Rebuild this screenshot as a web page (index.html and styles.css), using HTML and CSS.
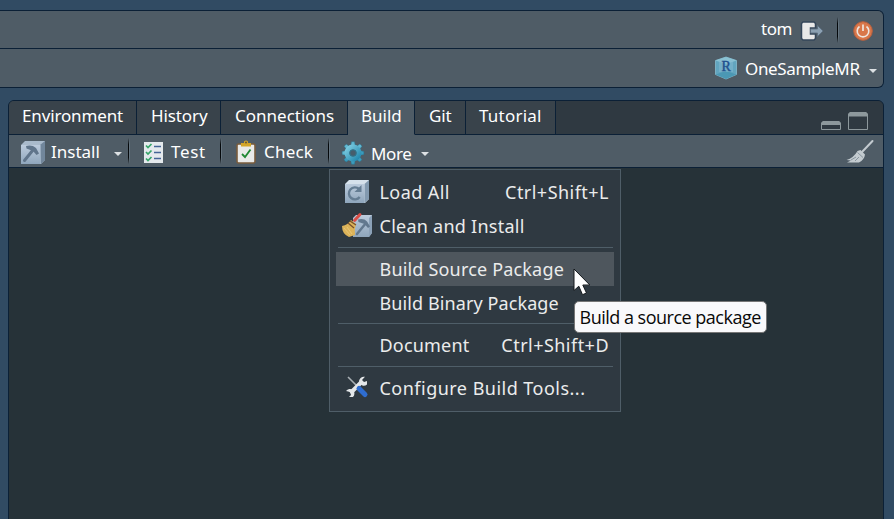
FILE: index.html
```html
<!DOCTYPE html>
<html lang="en">
<head>
<meta charset="utf-8">
<title>RStudio</title>
<link rel="stylesheet" href="styles.css">
</head>
<body>
<svg class="defs" width="0" height="0" aria-hidden="true">
  <defs>
    <linearGradient id="face" x1="0" y1="0" x2="0" y2="1"><stop offset="0" stop-color="#bccbdc"/><stop offset="1" stop-color="#8fa6bc"/></linearGradient>
    <linearGradient id="gearfill" x1="0" y1="0" x2="1" y2="1"><stop offset="0" stop-color="#7ccbe0"/><stop offset="1" stop-color="#2288ae"/></linearGradient>
  </defs>
</svg>
<header class="global">
  <div class="global-row account">
    <span class="user">tom</span>
    <svg class="signout" width="25" height="22" viewBox="0 0 25 22"><path d="M3 2h11l1.500 1.500V8h-5v6h5v4.500L14 20H3l-1.500-1.500v-15z" fill="#e8e8e8" stroke="#34465a" stroke-width="1.500"/><path d="M10.500 9h7V5.500L23 11l-5.500 5.500V13h-7z" fill="#8ba0b2" stroke="#5a6c7e" stroke-width=".8"/></svg>
    <i class="sep"></i>
    <svg class="power" width="20" height="20" viewBox="0 0 20 20"><circle cx="10" cy="10" r="9.300" fill="#d9774a" stroke="#b9603e"/><path d="M6.500 5.500a5.800 5.800 0 1 0 7 0" fill="none" stroke="#eee5df" stroke-width="1.600"/><path d="M10 3.500v6.500" stroke="#eee5df" stroke-width="1.700"/></svg>
  </div>
  <div class="global-row project">
    <svg width="24" height="24" viewBox="0 0 24 24"><path d="M12 1l10.500 3.500v14L12 23 1.500 18.500v-14z" fill="#62a5bf" stroke="#86bdcf" stroke-width=".8"/><path d="M1.500 4.500L12 8l10.500-3.500L12 1z" fill="#8ac2d3"/><path d="M1.500 18.500L12 15l10.500 3.500L12 23z" fill="#4b98b4"/><path d="M5 4h14v12H5z" fill="#86b9d1" opacity=".5"/><text x="12.200" y="14.500" class="cube-letter">R</text></svg>
    <span class="project-name">OneSampleMR</span>
    <i class="caret"></i>
  </div>
</header>
<main class="pane">
  <nav class="tabs">
    <div class="tab t-env"><span>Environment</span></div>
    <div class="tab t-his"><span>History</span></div>
    <div class="tab t-con"><span>Connections</span></div>
    <div class="tab t-bld active"><span>Build</span></div>
    <div class="tab t-git"><span>Git</span></div>
    <div class="tab t-tut"><span>Tutorial</span></div>
    <div class="window">
      <svg width="50" height="20" viewBox="0 0 50 20"><path d="M1.500 18.500v-6.500l2-1.500h15l2 1.500v6.500z" fill="#2f3941" stroke="#8d989c"/><path d="M1 14v-2l2-2h16l2 2v2z" fill="#8d989c"/><path d="M28.500 18.500V3l2-1.500h15l2 1.500v15.500z" fill="#2f3941" stroke="#8d989c"/><path d="M28 5.500V3l2-2h16l2 2v2.500z" fill="#8d989c"/></svg>
    </div>
  </nav>
  <div class="toolbar">
    <div class="tool install">
      <svg width="24" height="24" viewBox="0 0 24 24"><path d="M0 4l4-4h20v19l-4 4H0z" fill="#a9bacb"/><path d="M19 4l5-4v19l-4 4z" fill="#71869b"/><path d="M0 4h19.500v19H0z" fill="url(#face)"/><path d="M3.500 19.500L12 9" stroke="#60758b" stroke-width="3" stroke-linecap="round"/><path d="M5 5q6-1.500 10 2l3 5.500-2.500 1.500-3.500-4L5.500 7.500z" fill="#60758b"/></svg>
      <span>Install</span><i class="caret"></i>
    </div>
    <i class="sep"></i>
    <div class="tool test">
      <svg width="19" height="21" viewBox="0 0 19 21"><path d="M0 0h19v21H0z" fill="#e4e9ed"/><path d="M2 3.500l2 2L7.500 2M2 10l2 2 3.500-3.500M2 16.500l2 2L7.500 15" fill="none" stroke="#36a569" stroke-width="1.700"/><path d="M10 4.500h7M10 10.500h7M10 16.500h7" stroke="#456597" stroke-width="1.300"/></svg>
      <span>Test</span>
    </div>
    <i class="sep"></i>
    <div class="tool check">
      <svg width="20" height="24" viewBox="0 0 20 24"><rect x="1" y="4" width="18" height="19" rx="1.500" fill="#e9eae9" stroke="#795c3d" stroke-width="1.600"/><path d="M5 6.500V3h3V1.500q2-2 4 0V3h3v3.500z" fill="#d3a528"/><circle cx="10" cy="2.500" r="1" fill="#645330"/><path d="M6 14l3 3 5.500-7.500" fill="none" stroke="#218834" stroke-width="1.800"/></svg>
      <span>Check</span>
    </div>
    <i class="sep"></i>
    <div class="tool more">
      <svg width="22" height="24" viewBox="0 0 22 24"><g fill="url(#gearfill)" stroke="#207998" stroke-width=".4"><path d="M8.800 5L9.500.8h3L13.200 5zM8.800 19l.7 4.200h3l.7-4.200zM4 9.800L.2 10.500v3l3.800.7zM18 9.800l3.800.7v3l-3.800.7z"/><path d="M8.800 5L9.500.8h3L13.200 5zM8.800 19l.7 4.200h3l.7-4.200zM4 9.800L0 10.500v3l4 .7zM18 9.800l4 .7v3l-4 .7z" transform="rotate(45 11 12)"/></g><circle cx="11" cy="12" r="6" fill="none" stroke="url(#gearfill)" stroke-width="5"/><circle cx="11" cy="12" r="3.300" fill="#465d6c" stroke="#287d98" stroke-width=".8"/></svg>
      <span>More</span><i class="caret"></i>
    </div>
    <svg class="clear" width="28" height="23" viewBox="0 0 28 23"><path d="M16 12L26.500 1" stroke="#c3cacf" stroke-width="2" stroke-linecap="round"/><path d="M11.500 11l3-1 4.500 4.500q-.5 5-6 8H1l4-2-4.500-.5q7-2 11-9z" fill="#c3cbd0"/><path d="M11.500 12.500l5.500 5M5 20l5-3M9 21l4-4" stroke="#788791" stroke-width=".8"/></svg>
  </div>
</main>
<div class="menu">
  <div class="item">
    <svg class="i-load" width="24" height="23" viewBox="0 0 24 23"><path d="M0 4l4-4h20v19l-4 4H0z" fill="#d6e1eb"/><path d="M19.500 4L24 0v19l-4.500 4z" fill="#8299af"/><path d="M0 4h19.500v19H0z" fill="url(#face)"/><path d="M14 9a6 6 0 1 0 .7 8" fill="none" stroke="#657d93" stroke-width="2.400"/><path d="M16.500 5v7h-7z" fill="#657d93"/></svg>
    <span class="l-load">Load All</span><kbd>Ctrl+Shift+L</kbd>
  </div>
  <div class="item">
    <svg class="i-clean" width="30" height="25" viewBox="0 0 30 25"><path d="M11 5l3-3h16v18l-3 4H11z" fill="url(#face)"/><path d="M27 5l3-3v18l-3 4z" fill="#8ba1b8"/><path d="M15 21l9-11" stroke="#62788e" stroke-width="2.500" stroke-linecap="round"/><path d="M16 6.500q6-1.500 9 2l3 5-2 1.500-3.500-4-6-2z" fill="#62788e"/><path d="M12.500 7.500L18 1.500" stroke="#d84e47" stroke-width="3" stroke-linecap="round"/><path d="M0 13q6-1 9-6l5 4q-2 5-1 11l-6 2Q0 21 0 13z" fill="#dcb359"/><path d="M6 10l6 5M8 8l6 4" stroke="#78502c" stroke-width="1.300"/><path d="M2 15l6 7M5 14l5 7" stroke="#ecd084" stroke-width=".7"/></svg>
    <span class="l-clean">Clean and Install</span>
  </div>
  <hr>
  <div class="item hover"><span class="l-src">Build Source Package</span></div>
  <div class="item"><span class="l-bin">Build Binary Package</span></div>
  <hr>
  <div class="item"><span class="l-doc">Document</span><kbd>Ctrl+Shift+D</kbd></div>
  <hr>
  <div class="item">
    <svg class="i-tools" width="24" height="22" viewBox="0 0 24 22"><path d="M3 1l9 9" stroke="#a9b0b5" stroke-width="1.600"/><path d="M5.500 17L16.500 6" stroke="#e4e7e9" stroke-width="4"/><path d="M20 .8a5 5 0 0 0-6 5.500 5 5 0 0 0 8 2.200V5l-3 1-2-2zM1 15a5 5 0 0 1 7-1 5 5 0 0 1 0 7H4l2-2-1-3z" fill="#e4e7e9"/><path d="M14 12.500l6 6" stroke="#2f6dd0" stroke-width="5" stroke-linecap="round"/></svg>
    <span class="l-conf">Configure Build Tools...</span>
  </div>
</div>
<div class="tooltip"><span>Build a source package</span></div>
<svg class="cursor" width="20" height="29" viewBox="0 0 20 29"><path d="M1 1v21.500l4.800-4.300 3.700 8.500 4-1.700-3.700-8h7z" fill="#fff" stroke="#14191d" stroke-width="1"/></svg>
</body>
</html>
```
FILE: styles.css
```css
* { box-sizing: border-box; }
body {
  margin: 0; width: 894px; height: 519px; overflow: hidden; position: relative;
  background: #314b63; color: #fff;
  font: 17px/24px "Noto Sans", "Open Sans", sans-serif;
}
svg { display: block; flex: none; overflow: visible; }
span, kbd { display: block; white-space: nowrap; font: inherit; }
.defs { position: absolute; }
.caret { width: 0; height: 0; margin-top: 5px; border: 4px solid transparent; border-top-color: #dde1e4; border-bottom: 0; flex: none; }
.sep { width: 2px; height: 26px; flex: none; background: linear-gradient(90deg, #05090c 50%, #64737e 50%); -webkit-mask-image: linear-gradient(transparent, #000 25%, #000 75%, transparent); }

.global { width: 884px; height: 78px; margin-top: 10px; border: 1px solid #0b2036; border-left: 0; border-radius: 0 6px 6px 0; background: #4f5c66; }
.global-row { display: flex; align-items: center; height: 38px; }
.account { border-bottom: 1px solid #0b2036; padding-left: 761px; }
.user { width: 39px; margin-top: -2px; letter-spacing: -.5px; }
.signout { margin-top: 3px; }
.account .sep { margin-left: 12px; }
.power { margin: 3px 0 0 14px; }
.project { padding-left: 714px; }
.project-name { width: 124px; margin: 2px 0 0 7px; letter-spacing: -.36px; }
.cube-letter { font: 14px "Liberation Serif", serif; fill: #204f8d; stroke: #204f8d; stroke-width: .4px; text-anchor: middle; }

.pane { width: 876px; height: 430px; margin: 12px 0 0 8px; border: 1px solid #0b2036; border-radius: 6px 6px 0 0; background: #263238; overflow: hidden; }
.tabs { display: flex; height: 34px; background: #2f3941; }
.tab { height: 34px; padding: 3px 0 0 14px; border-right: 1px solid #0b2036; border-bottom: 1px solid #0b2036; background: #39434b; letter-spacing: -.1px; }
.tab.active { background: #4f5c66; border-bottom-color: #4f5c66; }
.t-env { width: 128px; padding-left: 13px; letter-spacing: -.14px; }
.t-his { width: 84px; }
.t-con { width: 127px; letter-spacing: 0; }
.t-bld { width: 67px; padding-left: 13px; letter-spacing: 0; }
.t-git { width: 51px; }
.t-tut { width: 90px; padding-left: 13px; letter-spacing: .22px; }
.window { flex: 1; border-bottom: 1px solid #0b2036; padding: 10px 0 0 264px; }

.toolbar { display: flex; align-items: center; height: 33px; background: #4f5c66; border-bottom: 1px solid #0b2036; padding-left: 12px; }
.tool { display: flex; align-items: center; flex: none; }
.tool span { margin-top: 2px; }
.install { width: 107px; }
.install svg { margin-top: 3px; }
.install span { width: 63px; margin-left: 6px; }
.test { width: 76px; margin-left: 14px; }
.test svg { margin-top: 3px; }
.test span { margin-left: 8px; letter-spacing: .7px; }
.check { width: 92px; margin-left: 14px; }
.check svg { margin-top: 2px; }
.check span { margin-left: 8px; letter-spacing: .2px; }
.more { width: 91px; margin-left: 12px; }
.more svg { margin-top: 4px; }
.more span { width: 50px; margin: 5px 0 0 7px; letter-spacing: -.4px; }
.clear { margin-left: 413px; }

.menu { position: absolute; left: 329px; top: 169px; width: 292px; height: 243px; padding: 5px 6px; border: 1px solid #4f5e68; background: #2f3941; color: #ebecec; font-size: 18px; }
.item { display: flex; align-items: center; height: 34px; padding: 0 5px 0 43.500px; }
.item svg { margin-top: -2px; }
.item kbd { margin-left: auto; letter-spacing: .47px; }
.i-load { margin-left: -35px; }
.i-load + span { margin-left: 11px; }
.i-clean { margin-left: -37.500px; }
.i-clean + span { margin-left: 7.500px; }
.i-tools { margin-left: -35px; }
.i-tools + span { margin-left: 11px; }
.l-load { letter-spacing: .42px; }
.l-clean { letter-spacing: .25px; }
.l-src { letter-spacing: .18px; }
.l-bin { letter-spacing: .1px; }
.l-doc { letter-spacing: .2px; }
.l-conf { letter-spacing: .48px; }
.hover { background: #4e565d; }
.menu hr { height: 1px; margin: 3.5px 1px 4.17px 2px; border: 0; background: #4f5e68; }

.tooltip { position: absolute; left: 574px; top: 301px; width: 193px; height: 32px; padding: 3px 0 0 4.500px; border: 1px solid #767676; border-radius: 5px; background: #f9f9fb; color: #080808; font: 18px/25px "Open Sans", "Noto Sans", sans-serif; letter-spacing: -.5px; }
.cursor { position: absolute; left: 573px; top: 268px; }
```
